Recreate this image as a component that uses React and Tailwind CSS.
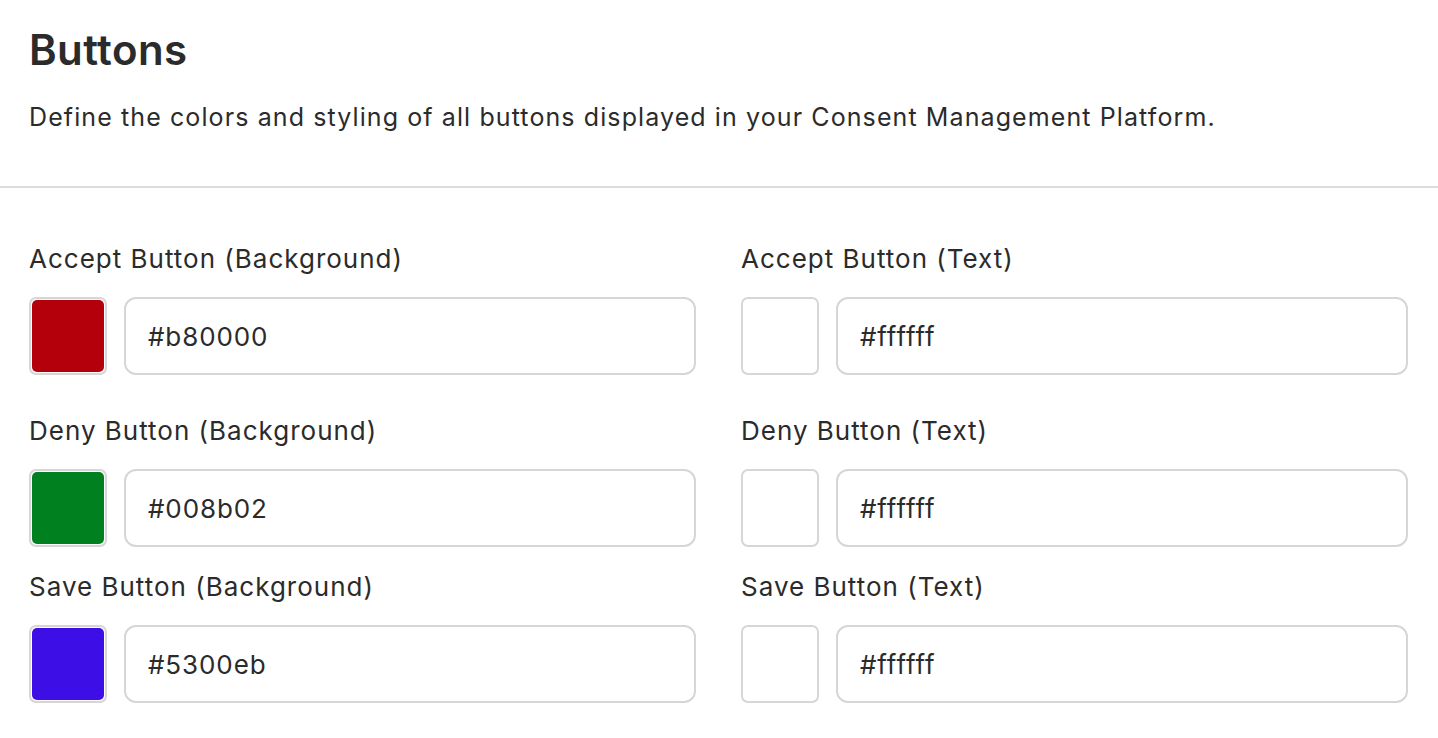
import React, { useState } from 'react';

const fields = [
  { id: 'accept', left: { label: 'Accept Button (Background)', value: '#b80000', swatch: '#b4000b' }, right: { label: 'Accept Button (Text)', value: '#ffffff', swatch: '#ffffff' }, extra: true },
  { id: 'deny', left: { label: 'Deny Button (Background)', value: '#008b02', swatch: '#00801f' }, right: { label: 'Deny Button (Text)', value: '#ffffff', swatch: '#ffffff' } },
  { id: 'save', left: { label: 'Save Button (Background)', value: '#5300eb', swatch: '#3d0ee5' }, right: { label: 'Save Button (Text)', value: '#ffffff', swatch: '#ffffff' } },
];

function ColorField({ label, value, swatch }) {
  const [text, setText] = useState(value);
  return (
    <div>
      <label className="block text-[26px] leading-[32px] tracking-[1px] text-[#2b2b2b]">{label}</label>
      <div className="mt-[22px] flex gap-[17px]">
        <div className="w-[78px] h-[78px] shrink-0 rounded-[7px] border-2 border-[#d6d6d6] p-[1px] bg-white">
          <div className="w-full h-full rounded-[5px]" style={{ backgroundColor: swatch }} />
        </div>
        <input
          type="text"
          value={text}
          onChange={(e) => setText(e.target.value)}
          className="flex-1 min-w-0 h-[78px] rounded-[12px] border-2 border-[#d6d6d6] bg-white px-[22px] text-[26px] tracking-[0.9px] text-[#2b2b2b] outline-none"
        />
      </div>
    </div>
  );
}

export default function App() {
  return (
    <div className="min-h-screen bg-white font-['Inter','Noto_Sans',sans-serif] text-[#2b2b2b]">
      {/* Header */}
      <div className="px-[29px] pt-[28px] pb-[53px] border-b-2 border-[#dcdcdc]">
        <h1 className="text-[42px] leading-[44px] font-semibold tracking-[0.4px]">Buttons</h1>
        <p className="mt-[29px] text-[25px] leading-[32px] tracking-[1.1px]">
          Define the colors and styling of all buttons displayed in your Consent Management Platform.
        </p>
      </div>

      {/* Fields */}
      <div className="pl-[29px] pr-[30px] pt-[55px]">
        {fields.map((row) => (
          <div key={row.id} className={`grid grid-cols-2 gap-[45px] ${row.extra ? 'mb-[40px]' : 'mb-[24px]'}`}>
            <ColorField {...row.left} />
            <ColorField {...row.right} />
          </div>
        ))}
      </div>
    </div>
  );
}
